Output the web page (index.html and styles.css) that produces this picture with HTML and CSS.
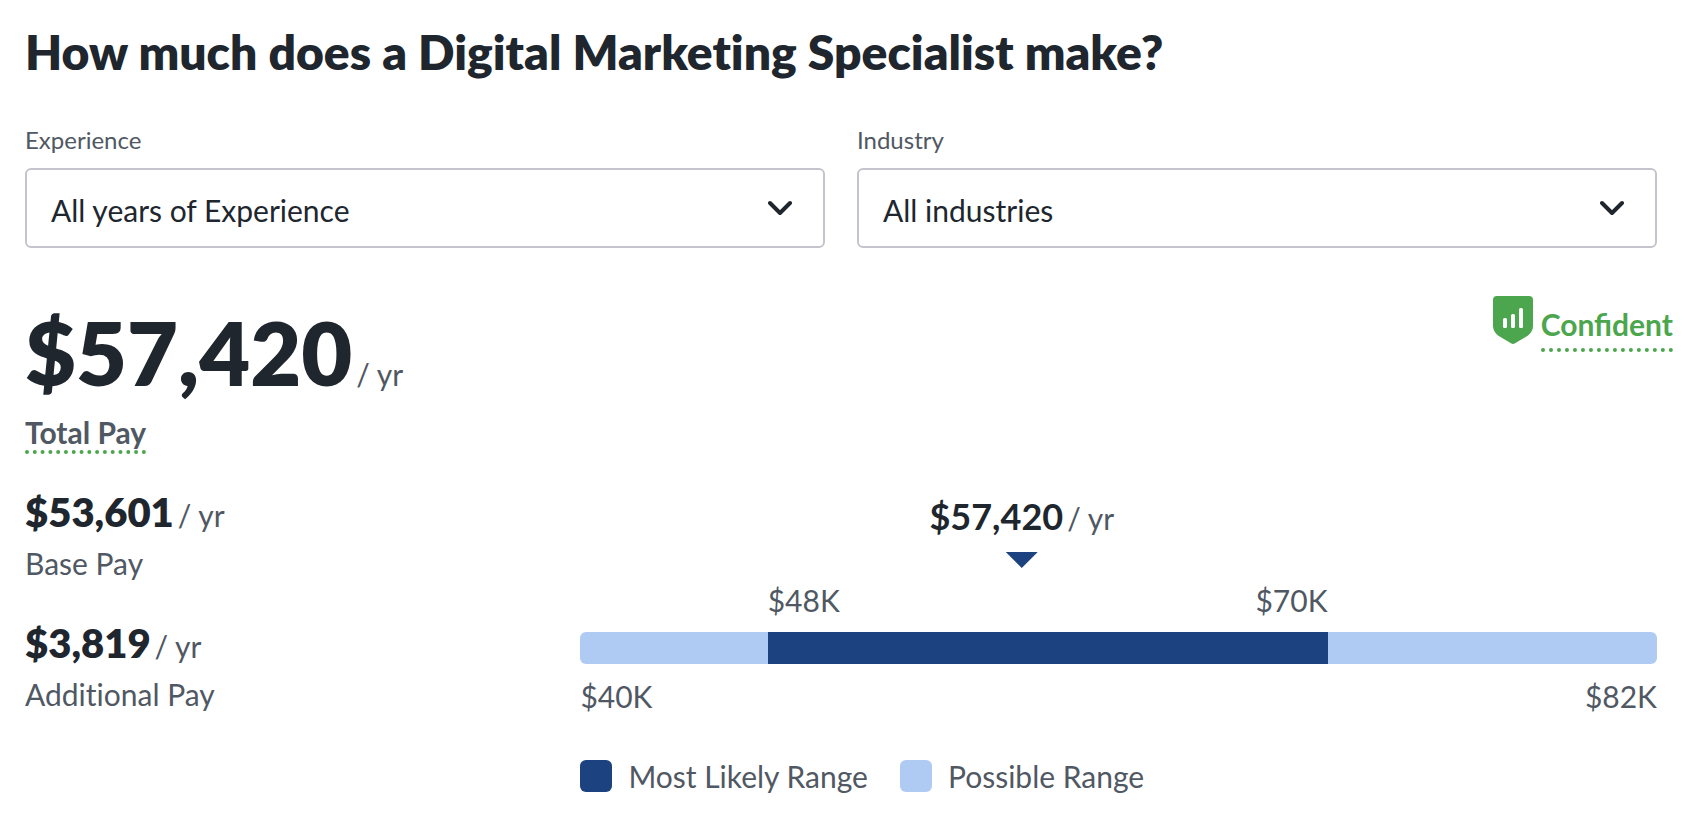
FILE: index.html
```
<!DOCTYPE html>
<html lang="en">
<head>
    <meta charset="UTF-8">
    <meta name="viewport" content="width=device-width, initial-scale=1.0">
    <title>Digital Marketing Specialist Salary</title>
    <link rel="stylesheet" href="styles.css">
</head>
<body>
    <main class="salary">
        <h1>How much does a Digital Marketing Specialist make?</h1>

        <form class="filters">
            <div class="field">
                <label for="experience">Experience</label>
                <div class="select-wrap">
                    <select id="experience">
                        <option>All years of Experience</option>
                    </select>
                    <svg class="chevron" viewBox="0 0 24 16" aria-hidden="true"><path d="M2 3l10 10L22 3"/></svg>
                </div>
            </div>
            <div class="field">
                <label for="industry">Industry</label>
                <div class="select-wrap">
                    <select id="industry">
                        <option>All industries</option>
                    </select>
                    <svg class="chevron" viewBox="0 0 24 16" aria-hidden="true"><path d="M2 3l10 10L22 3"/></svg>
                </div>
            </div>
        </form>

        <div class="summary">
            <section class="pay">
                <div class="total"><strong>$57,420</strong> <span class="per">/ yr</span></div>
                <a class="dotted total-label" href="#total-pay">Total Pay</a>
                <div class="pay-item">
                    <div class="amount"><strong>$53,601</strong> <span class="per">/ yr</span></div>
                    <p>Base Pay</p>
                </div>
                <div class="pay-item">
                    <div class="amount"><strong>$3,819</strong> <span class="per">/ yr</span></div>
                    <p>Additional Pay</p>
                </div>
            </section>

            <section class="details">
                <div class="confidence">
                    <svg class="shield" viewBox="0 0 40 48" aria-hidden="true">
                        <path fill="#4ca64e" d="M4 0h32a4 4 0 0 1 4 4v26c0 4-2 7-5 9.500L22 47.300q-2 1.200-4 0L5 39.500C2 37 0 34 0 30V4a4 4 0 0 1 4-4z"/>
                        <g fill="#fff">
                            <rect x="10" y="22" width="4" height="10" rx="1.500"/>
                            <rect x="18" y="18" width="4" height="14" rx="1.500"/>
                            <rect x="26" y="12" width="4" height="20" rx="1.500"/>
                        </g>
                    </svg>
                    <a class="dotted" href="#confidence">Confident</a>
                </div>

                <div class="range">
                    <div class="marker" style="margin-left: 41%">
                        <div class="marker-value"><strong>$57,420</strong> <span class="per">/ yr</span></div>
                        <div class="arrow"></div>
                    </div>
                    <div class="range-labels" style="margin-left: 17.4%; width: 52%">
                        <span>$48K</span>
                        <span>$70K</span>
                    </div>
                    <div class="bar">
                        <div class="likely" style="margin-left: 17.4%; width: 52%"></div>
                    </div>
                    <div class="range-labels">
                        <span>$40K</span>
                        <span>$82K</span>
                    </div>
                    <ul class="legend">
                        <li><span class="swatch likely"></span>Most Likely Range</li>
                        <li><span class="swatch possible"></span>Possible Range</li>
                    </ul>
                </div>
            </section>
        </div>
    </main>
</body>
</html>
```
FILE: styles.css
```
* {
    box-sizing: border-box;
}
body {
    margin: 0;
    background: #fff;
    color: #20262e;
    font-family: Lato, sans-serif;
    font-size: 30px;
    line-height: 40px;
}
.salary {
    padding: 20px 25px;
}
h1 {
    margin: 0 0 40px;
    font-size: 48px;
    font-weight: 800;
    line-height: 64px;
    font-variant-ligatures: no-common-ligatures;
}
p {
    margin: 0;
}

/* filters */
.filters {
    display: grid;
    grid-template-columns: 1fr 1fr;
    gap: 32px;
    margin-right: 16px;
}
.field label {
    display: block;
    margin-bottom: 12px;
    color: #505863;
    font-size: 24px;
    line-height: 32px;
}
.select-wrap {
    position: relative;
}
.select-wrap select {
    display: block;
    width: 100%;
    height: 80px;
    padding: 4px 72px 0 24px;
    border: 2px solid #c4c5cc;
    border-radius: 6px;
    background: #fff;
    color: #20262e;
    font-family: inherit;
    font-size: 30px;
    appearance: none;
}
.chevron {
    position: absolute;
    top: 32px;
    right: 33px;
    width: 24px;
    height: 16px;
    fill: none;
    stroke: #20262e;
    stroke-width: 4;
    stroke-linecap: round;
    stroke-linejoin: round;
    pointer-events: none;
}

/* pay */
.summary {
    display: grid;
    grid-template-columns: 33.7% 1fr;
    margin-top: 48px;
}
.pay {
    padding-top: 8px;
    font-variant-ligatures: no-common-ligatures;
}
.per {
    color: #505863;
    font-size: 30px;
    font-weight: 400;
}
.total,
.amount,
.marker-value {
    display: flex;
    align-items: baseline;
    gap: 4px;
}
.total {
    font-size: 88px;
    line-height: 96px;
    margin-bottom: 14px;
}
.total strong,
.amount strong {
    font-weight: 800;
}
.total .per,
.amount .per,
.marker-value .per {
    line-height: 40px;
}
.dotted {
    display: block;
    width: max-content;
    border-bottom: 4px dotted #4ca64e;
    font-weight: 700;
    line-height: 36px;
    text-decoration: none;
}
.total-label {
    margin-bottom: 34px;
    color: #505863;
}
.pay-item {
    margin-bottom: 36px;
    color: #505863;
}
.amount {
    margin-bottom: 7px;
    color: #20262e;
    font-size: 40px;
    line-height: 48px;
}

/* confidence */
.confidence {
    display: flex;
    justify-content: flex-end;
    gap: 8px;
    margin-bottom: 140px;
}
.shield {
    width: 40px;
    height: 48px;
}
.confidence .dotted {
    margin-top: 10px;
    padding-bottom: 6px;
    color: #4ca64e;
}

/* range */
.range {
    margin-right: 16px;
    color: #505863;
}
.marker {
    width: max-content;
    margin-bottom: 12px;
    transform: translateX(-50%);
}
.marker-value {
    margin-bottom: 12px;
    color: #20262e;
    font-size: 36px;
    line-height: 48px;
}
.arrow {
    width: 32px;
    height: 16px;
    margin: 0 auto;
    background: #1c4280;
    clip-path: polygon(0 0, 100% 0, 50% 100%);
}
.range-labels {
    display: flex;
    justify-content: space-between;
}
.bar {
    height: 32px;
    margin: 12px 0;
    border-radius: 6px;
    background: #b0cbf3;
}
.bar .likely {
    height: 100%;
}
.likely {
    background: #1c4280;
}
.possible {
    background: #b0cbf3;
}
.legend {
    display: flex;
    gap: 32px;
    margin: 40px 0 0;
    padding: 0;
    list-style: none;
}
.legend li {
    display: flex;
    align-items: center;
    gap: 16px;
}
.swatch {
    width: 32px;
    height: 32px;
    border-radius: 6px;
}
```
